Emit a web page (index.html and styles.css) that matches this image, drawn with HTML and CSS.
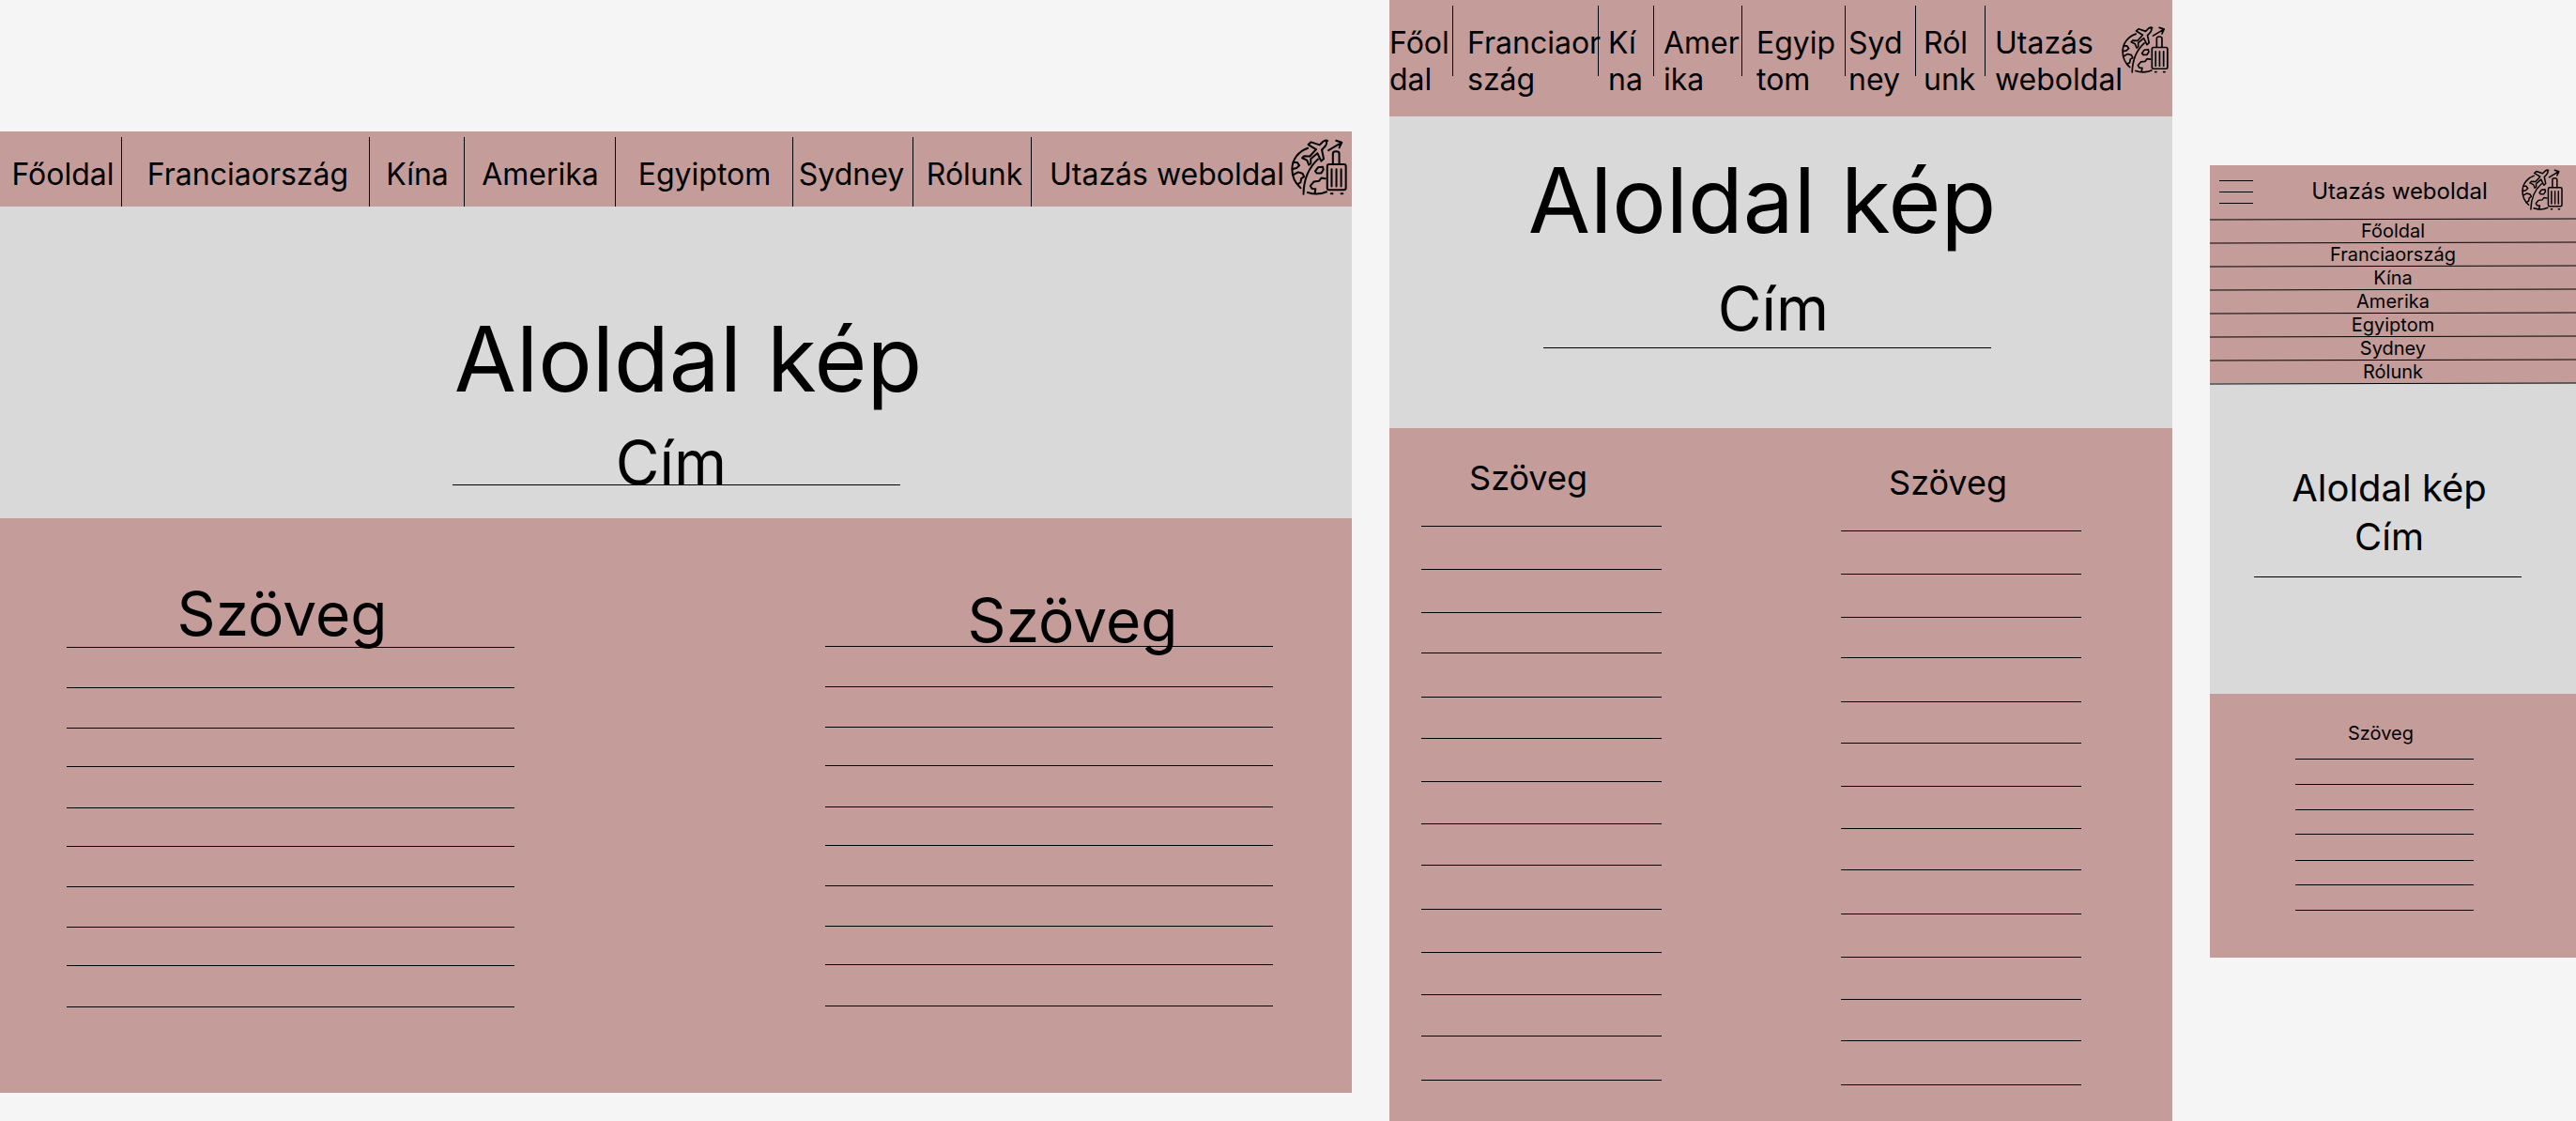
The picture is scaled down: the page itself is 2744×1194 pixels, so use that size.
FILE: index.html
```html
<!DOCTYPE html>
<html lang="hu">
<head>
<meta charset="utf-8">
<title>Utazás weboldal</title>
<meta name="viewport" content="width=device-width, initial-scale=1">
<link rel="stylesheet" href="styles.css">
</head>
<body>
<svg class="defs" aria-hidden="true">
  <symbol id="travel" viewBox="46 38 178 178">
    <g fill="none" stroke="#000" stroke-width="6" stroke-linecap="round" stroke-linejoin="round">
      <path d="M100 67C70 77 50 103 50 134c0 24 10 44 27 59"/>
      <path d="M99 207c18 6 42 6 60-2"/>
      <path d="M86 212c1-44 17-84 46-110"/>
      <path d="M162 44c-4-4-12-1-17 5l-8 8-27-9-9 8 25 15-20 22-18-1-6 6 15 7 6 15 6-5 0-14 21-18 12 25 8-7-6-29 8-8c6-6 9-15 5-20z"/>
      <path d="M165 74l40-24M189 43l18 6-8 17"/>
      <path d="M54 112h12l7 10-9 8-12 3"/>
      <path d="M53 152l16-9 14 4 5 10-9 6-2 12-10 7"/>
      <path d="M132 128l15-2 2 9-7 11h-14l-5-6z"/>
      <path d="M155 163l-12-2-8 10-16 2-11 13 5 9 11 1-2 12"/>
      <rect x="161" y="118" width="59" height="81" rx="6"/>
      <path d="M179 117V84c0-9 20-9 20 0v33M175 134v54M190 134v54M205 134v54M173 211h5M205 211h5"/>
    </g>
  </symbol>
</svg>
<main class="board">

  <article class="frame desktop">
    <nav class="bar">
      <a class="near" href="#">Főoldal</a>
      <a class="near" href="#">Franciaország</a>
      <a href="#">Kína</a>
      <a href="#">Amerika</a>
      <a href="#">Egyiptom</a>
      <a class="far" href="#">Sydney</a>
      <a class="near" href="#">Rólunk</a>
      <div class="brand"><span>Utazás weboldal</span><svg class="logo"><use href="#travel"/></svg></div>
    </nav>
    <header class="hero">
      <h1>Aloldal kép</h1>
      <h2>Cím</h2>
      <hr>
    </header>
    <div class="content">
      <section class="column">
        <h3>Szöveg</h3>
        <div class="lines"><i></i><i></i><i></i><i></i><i></i><i></i><i></i><i></i><i></i><i></i></div>
      </section>
      <section class="column">
        <h3>Szöveg</h3>
        <div class="lines"><i></i><i></i><i></i><i></i><i></i><i></i><i></i><i></i><i></i><i></i></div>
      </section>
    </div>
  </article>

  <article class="frame tablet">
    <nav class="bar">
      <a class="flush" href="#">Főol<br>dal</a>
      <a class="loose" href="#">Franciaor<br>szág</a>
      <a href="#">Kí<br>na</a>
      <a href="#">Amer<br>ika</a>
      <a class="loose" href="#">Egyip<br>tom</a>
      <a class="tight" href="#">Syd<br>ney</a>
      <a class="snug" href="#">Ról<br>unk</a>
      <div class="brand"><span>Utazás<br>weboldal</span><svg class="logo"><use href="#travel"/></svg></div>
    </nav>
    <header class="hero">
      <h1>Aloldal kép</h1>
      <h2>Cím</h2>
      <hr>
    </header>
    <div class="content">
      <section class="column">
        <h3>Szöveg</h3>
        <div class="lines"><i></i><i></i><i></i><i></i><i></i><i></i><i></i><i></i><i></i><i></i><i></i><i></i><i></i><i></i></div>
      </section>
      <section class="column">
        <h3>Szöveg</h3>
        <div class="lines"><i></i><i></i><i></i><i></i><i></i><i></i><i></i><i></i><i></i><i></i><i></i><i></i><i></i><i></i></div>
      </section>
    </div>
  </article>

  <article class="frame mobile">
    <div class="topbar">
      <button class="burger" type="button" aria-label="Menü"><i></i><i></i><i></i></button>
      <span class="title">Utazás weboldal</span>
      <svg class="logo"><use href="#travel"/></svg>
    </div>
    <nav class="menu">
      <a href="#">Főoldal</a>
      <a href="#">Franciaország</a>
      <a href="#">Kína</a>
      <a href="#">Amerika</a>
      <a href="#">Egyiptom</a>
      <a href="#">Sydney</a>
      <a href="#">Rólunk</a>
    </nav>
    <header class="hero">
      <h1>Aloldal kép</h1>
      <h2>Cím</h2>
      <hr>
    </header>
    <div class="content">
      <section class="column">
        <h3>Szöveg</h3>
        <div class="lines"><i></i><i></i><i></i><i></i><i></i><i></i><i></i></div>
      </section>
    </div>
  </article>

</main>
</body>
</html>
```
FILE: styles.css
```css
* { box-sizing: border-box; }

body {
  margin: 0;
  background: #f5f5f5;
  color: #000;
  font-family: Inter, "Liberation Sans", sans-serif;
}

h1, h2, h3 { margin: 0; font-weight: 400; text-align: center; }
a { color: inherit; text-decoration: none; }
.defs { position: absolute; width: 0; height: 0; }

.board {
  display: grid;
  grid-template-columns: 1440fr 834fr 390fr;
  column-gap: 40px;
  align-items: start;
  min-height: 100vh;
}

.frame { display: flex; flex-direction: column; min-width: 0; background: #c49d9b; }
.desktop { margin-top: 140px; }
.tablet { min-height: 100vh; }
.mobile { margin-top: 176px; }

/* Navigation bars */
.bar {
  display: grid;
  padding-top: 6px;
  font-size: 32px;
  line-height: 39px;
  white-space: nowrap;
}
.bar a {
  padding-top: 20px;
  background: linear-gradient(#000, #000) right top / 1px 75px no-repeat;
}
.brand { display: flex; align-items: flex-start; justify-content: space-between; }
.brand span { min-width: 0; padding-top: 20px; }
.logo { flex: none; display: block; }

.desktop .bar { grid-template-columns: 130fr 264fr 101fr 161fr 189fr 128fr 126fr 341fr; }
.desktop .bar a { padding-bottom: 15px; text-align: center; }
.desktop .bar .near { padding-left: 4px; }
.desktop .bar .far { padding-right: 4px; }
.desktop .brand { padding: 0 5px 0 19px; }
.desktop .logo { width: 60px; height: 60px; margin-top: 2px; }

.tablet .bar { grid-template-columns: 68fr 155fr 59fr 94fr 110fr 75fr 74fr 199fr; }
.tablet .bar > * { min-width: 0; padding-left: 10px; padding-bottom: 20px; }
.tablet .bar .flush { padding-left: 0; }
.tablet .bar .tight { padding-left: 3px; }
.tablet .bar .snug { padding-left: 8px; }
.tablet .bar .loose { padding-left: 15px; }
.tablet .brand { padding-right: 4px; }
.tablet .logo { width: 50px; height: 50px; margin-top: 22px; }

/* Hero */
.hero { display: flex; flex-direction: column; align-items: center; background: #d9d9d9; }
.hero hr { width: 477px; max-width: 100%; height: 1px; margin: 0; border: 0; background: #000; }
.hero h1 { font-size: 96px; line-height: 116px; }
.hero h2 { font-size: 64px; line-height: 77px; }

.desktop .hero { padding: 104px 0 35px; }
.desktop .hero h1 { padding-left: 26px; margin-bottom: 14px; }
.desktop .hero h2 { padding-right: 10px; margin-bottom: -15px; }

.tablet .hero { padding: 31px 30px 85px 0; }
.tablet .hero h1 { padding-right: 10px; margin-bottom: 19px; }
.tablet .hero h2 { padding-left: 14px; margin-bottom: 3px; }

.mobile .hero { padding: 88px 12px 124px 0; }
.mobile .hero h1, .mobile .hero h2 { padding-left: 4px; font-size: 40px; line-height: 48px; }
.mobile .hero h1 { margin-bottom: 4px; }
.mobile .hero h2 { margin-bottom: 18px; }
.mobile .hero hr { width: 285px; }

/* Text placeholders */
.content { display: grid; }
.column + .column { grid-column: 3; }
.lines { display: grid; }
.lines i { border-top: 1px solid #000; }

.desktop .content { grid-template-columns: 477fr 331fr 477fr; padding: 63px 84px 49px 71px; }
.desktop h3 { font-size: 64px; line-height: 77px; padding-right: 18px; }
.desktop .lines { margin-top: -3px; grid-template-rows: 43px 43px 41px 44px 41px 43px 43px 41px 44px 43px; }
.desktop .column + .column h3 { padding: 7px 0 0 50px; }
.desktop .column + .column .lines { margin-top: -11px; }

.tablet .content { grid-template-columns: 256fr 191fr 256fr; padding: 31px 97px 0 34px; }
.tablet h3 { font-size: 36px; line-height: 44px; padding-right: 28px; }
.tablet .lines { margin-top: 29px; grid-template-rows: 46px 46px 43px 47px 44px 46px 45px 44px 47px 46px 45px 44px 47px 43px; }
.tablet .column + .column { padding-top: 5px; }

.mobile .content { padding: 30px 109px 24px 91px; }
.mobile h3 { font-size: 20px; line-height: 24px; padding-right: 8px; }
.mobile .lines { margin-top: 15px; grid-template-rows: 27px 27px 26px 28px 26px 27px 27px; }

/* Mobile header and menu */
.topbar { display: flex; align-items: center; height: 57px; padding: 0 14px 0 10px; }
.burger {
  display: flex;
  flex-direction: column;
  justify-content: space-between;
  width: 36px;
  height: 25px;
  padding: 0;
  border: 0;
  background: none;
}
.burger i { height: 1px; background: #000; }
.title { flex: 1; padding: 0 0 2px 26px; font-size: 24px; line-height: 29px; text-align: center; white-space: nowrap; }
.mobile .logo { width: 44px; height: 44px; margin-bottom: 6px; }

.menu { display: flex; flex-direction: column; font-size: 20px; line-height: 27px; text-align: center; }
.menu a { position: relative; height: 25px; }
.menu a::before, .menu a:last-child::after {
  content: "";
  position: absolute;
  left: 0;
  top: 0;
  width: 100%;
  height: 1px;
  background: #000;
  transform: rotate(-0.15deg);
}
.menu a:last-child::after { top: 100%; }
```
